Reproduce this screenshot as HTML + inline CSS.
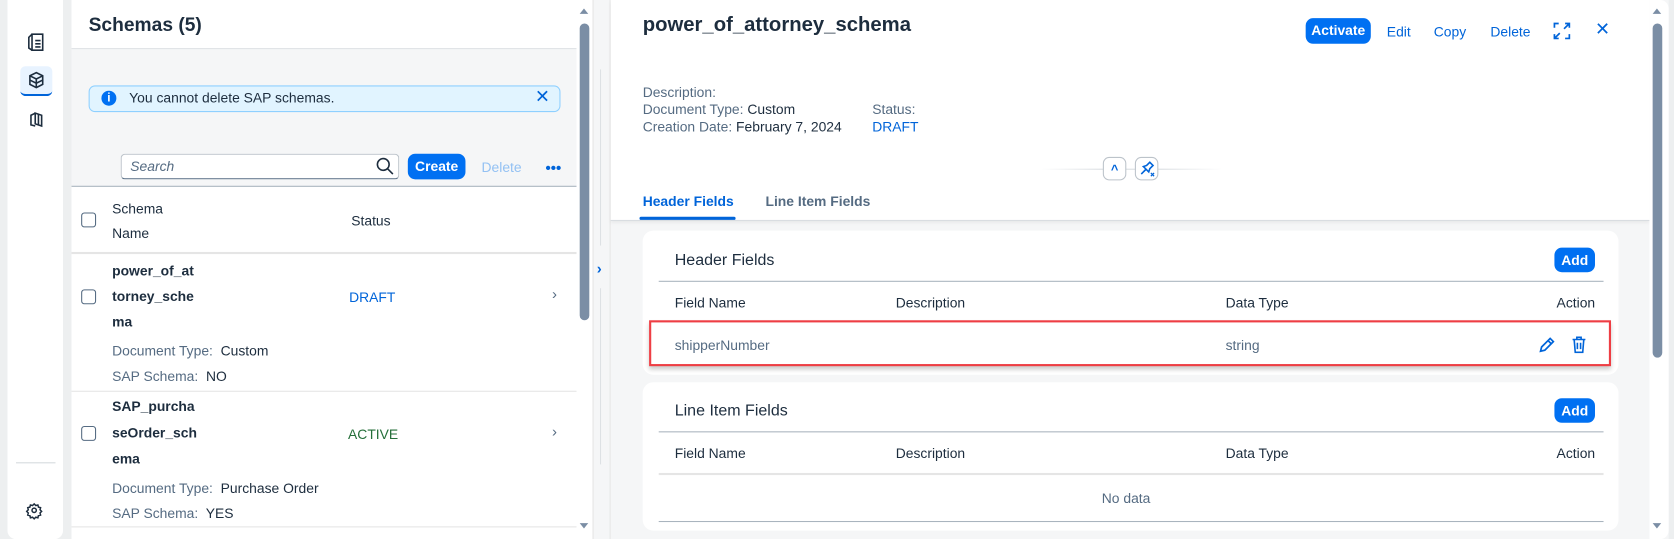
<!DOCTYPE html>
<html><head><meta charset="utf-8"><style>
*{box-sizing:border-box;margin:0;padding:0}
html,body{width:1674px;height:539px;overflow:hidden;background:#edeff0}
#w{position:absolute;left:0;top:0;width:1568px;height:505px;transform:scale(1.0676);transform-origin:0 0;font-family:"Liberation Sans",Arial,sans-serif;color:#1d2d3e;font-size:13px}
.a{position:absolute}
.btn{position:absolute;background:#0070f2;color:#fff;font-weight:bold;border-radius:7px;font-size:13px;text-align:center}
.lnk{position:absolute;color:#0064d9;font-size:13px}
.g{color:#556b82}
.chk{position:absolute;width:14px;height:14px;border:1px solid #556b82;border-radius:3px;background:#fff}
</style></head><body><div id="w">
<div class="a" style="left:7px;top:0;width:52px;height:505px;background:#fff;border-radius:0 0 8px 8px"></div>
<svg class="a" style="left:24px;top:29px" width="20" height="20" viewBox="0 0 20 20" fill="none" stroke="#1d2d3e" stroke-width="1.5"><path d="M6 3h10v15H6z"/><path d="M6 3L3 6v10l3 2"/><path d="M9 9h5M9 12h5M9 15h5"/></svg>
<div class="a" style="left:19px;top:62px;width:30px;height:28px;background:#e8f3ff;border-radius:5px;border-bottom:2px solid #0064d9"></div>
<svg class="a" style="left:25px;top:66px" width="18" height="18" viewBox="0 0 18 18" fill="none" stroke="#1d2d3e" stroke-width="1.5"><path d="M9 2l6 3v8l-6 3-6-3V5z"/><path d="M3 5l6 3 6-3M9 8v8M3 9l6 3 6-3"/></svg>
<svg class="a" style="left:25px;top:103px" width="18" height="18" viewBox="0 0 18 18" fill="none" stroke="#1d2d3e" stroke-width="1.5"><path d="M8 3l6 2v10l-6-2z"/><path d="M8 3L4 5v9l4 1M11 4v10"/></svg>
<div class="a" style="left:15px;top:433px;width:37px;height:1px;background:#d5dadd"></div>
<svg class="a" style="left:24px;top:470px" width="18" height="18" viewBox="0 0 18 18" fill="none" stroke="#1d2d3e" stroke-width="1.4"><circle cx="8" cy="8" r="2"/><path d="M8 2l1.5 1.5 2-.5.5 2 2 .5-.5 2L15 9l-1.5 1.5.5 2-2 .5-.5 2-2-.5L8 16l-1.5-1.5-2 .5-.5-2-2-.5.5-2L1 9l1.5-1.5-.5-2 2-.5.5-2 2 .5z"/></svg>

<div class="a" style="left:67px;top:0;width:473px;height:505px;background:#fff"></div>
<div class="a" style="left:83px;top:13px;font-size:18px;font-weight:bold">Schemas (5)</div>
<div class="a" style="left:67px;top:45px;width:473px;height:130px;background:#f5f6f7;border-top:1px solid #e0e3e6;border-bottom:1px solid #a9b4be"></div>
<div class="a" style="left:83px;top:80px;width:442px;height:25px;background:#e1f4ff;border:1px solid #8fd0ff;border-radius:6px"></div>
<div class="a" style="left:95px;top:85px;width:14px;height:14px;border-radius:50%;background:#0070f2;color:#fff;font-size:11px;font-weight:bold;text-align:center;line-height:14px">i</div>
<div class="a" style="left:121px;top:84px;font-size:13px">You cannot delete SAP schemas.</div>
<div class="a" style="left:501px;top:81px;color:#0064d9;font-size:17px">✕</div>
<div class="a" style="left:113px;top:144px;width:261px;height:24px;background:#fff;border:1px solid #bcc3ca;border-bottom-color:#556b82;border-radius:4px"></div>
<div class="a" style="left:122px;top:148px;font-style:italic;color:#556b82;font-size:13px">Search</div>
<svg class="a" style="left:352px;top:147px" width="17" height="17" viewBox="0 0 17 17" fill="none" stroke="#1d2d3e" stroke-width="1.5"><circle cx="7" cy="7" r="5.5"/><path d="M11 11l5 5"/></svg>
<div class="btn" style="left:382px;top:144px;width:54px;height:24px;line-height:24px">Create</div>
<div class="a" style="left:451px;top:149px;color:#93c1f3;font-size:13px">Delete</div>
<div class="a" style="left:511px;top:149px;color:#0064d9;font-size:14px;font-weight:bold;letter-spacing:0px">•••</div>
<div class="chk" style="left:76px;top:199px"></div>
<div class="a" style="left:105px;top:184px;font-size:13px;line-height:23px">Schema<br>Name</div>
<div class="a" style="left:329px;top:199px">Status</div>
<div class="a" style="left:67px;top:236px;width:473px;height:2px;background:#e5e5e5"></div>
<div class="chk" style="left:76px;top:271px"></div>
<div class="a" style="left:105px;top:242px;font-weight:bold;line-height:24px">power_of_at<br>torney_sche<br>ma</div>
<div class="a" style="left:327px;top:271px;color:#0064d9">DRAFT</div>
<div class="a" style="left:517px;top:267px;color:#556b82;font-size:14px">›</div>
<div class="a g" style="left:105px;top:317px;line-height:24px">Document Type:&nbsp; <span style="color:#1d2d3e">Custom</span><br>SAP Schema:&nbsp; <span style="color:#1d2d3e">NO</span></div>
<div class="a" style="left:67px;top:366px;width:473px;height:1px;background:#e5e5e5"></div>
<div class="chk" style="left:76px;top:399px"></div>
<div class="a" style="left:105px;top:369px;font-weight:bold;line-height:24.5px">SAP_purcha<br>seOrder_sch<br>ema</div>
<div class="a" style="left:326px;top:399px;color:#256f3a">ACTIVE</div>
<div class="a" style="left:517px;top:396px;color:#556b82;font-size:14px">›</div>
<div class="a g" style="left:105px;top:446px;line-height:23px">Document Type:&nbsp; <span style="color:#1d2d3e">Purchase Order</span><br>SAP Schema:&nbsp; <span style="color:#1d2d3e">YES</span></div>
<div class="a" style="left:67px;top:493px;width:473px;height:1px;background:#e5e5e5"></div>
<div class="a" style="left:540px;top:0;width:15px;height:505px;background:#fff"></div>
<div class="a" style="left:543px;top:22px;width:9px;height:278px;background:#7b8ea5;border-radius:5px"></div>
<div class="a" style="left:543px;top:8px;border:4px solid transparent;border-bottom:5px solid #7b8ea5;border-top:0"></div>
<div class="a" style="left:543px;top:490px;border:4px solid transparent;border-top:5px solid #7b8ea5;border-bottom:0"></div>
<div class="a" style="left:555px;top:0;width:17px;height:505px;background:#f5f6f7;border-left:1px solid #e5e5e5;border-right:1px solid #e5e5e5"></div>
<div class="a" style="left:562px;top:65px;width:1px;height:165px;background:#dde1e4"></div>
<div class="a" style="left:562px;top:270px;width:1px;height:165px;background:#dde1e4"></div>
<div class="a" style="left:559px;top:243px;color:#0064d9;font-weight:bold;font-size:14px">›</div>

<div class="a" style="left:572px;top:0;width:991px;height:505px;background:#f5f6f7"></div>
<div class="a" style="left:572px;top:0;width:973px;height:207px;background:#fff;border-bottom:1px solid #d9dde1;box-shadow:0 2px 3px rgba(0,0,0,.05)"></div>
<div class="a" style="left:602px;top:13px;font-size:19px;font-weight:bold">power_of_attorney_schema</div>
<div class="btn" style="left:1223px;top:17px;width:61px;height:24px;line-height:24px">Activate</div>
<div class="lnk" style="left:1299px;top:22px">Edit</div>
<div class="lnk" style="left:1343px;top:22px">Copy</div>
<div class="lnk" style="left:1396px;top:22px">Delete</div>
<svg class="a" style="left:1455px;top:21px" width="16" height="16" viewBox="0 0 16 16" fill="none" stroke="#0064d9" stroke-width="1.6"><path d="M1 5V1h4M11 1h4v4M15 11v4h-4M5 15H1v-4M10 6l5-5M6 10l-5 5"/></svg>
<div class="a" style="left:1494px;top:18px;color:#0064d9;font-size:17px">✕</div>
<div class="a g" style="left:602px;top:79px;line-height:16px">Description:<br>Document Type: <span style="color:#1d2d3e">Custom</span><br>Creation Date: <span style="color:#1d2d3e">February 7, 2024</span></div>
<div class="a g" style="left:817px;top:95px;line-height:16px">Status:<br><span style="color:#0064d9">DRAFT</span></div>
<div class="a" style="left:975px;top:158px;width:170px;height:1px;background:linear-gradient(90deg,transparent,#d9dde1,#d9dde1,transparent)"></div>
<div class="a" style="left:1033px;top:147px;width:22px;height:22px;background:#fff;border:1px solid #bcc3ca;border-radius:6px;color:#0064d9;text-align:center;font-size:12px;line-height:22px;font-weight:bold">^</div>
<div class="a" style="left:1063px;top:147px;width:22px;height:22px;background:#fff;border:1px solid #bcc3ca;border-radius:6px"></div>
<svg class="a" style="left:1066px;top:150px" width="17" height="17" viewBox="0 0 17 17" fill="none" stroke="#0064d9" stroke-width="1.5"><path d="M3 13l4-4M5 6l5 5 1-3 3-3-3-3-3 3z"/><path d="M12 12l3 3M15 12l-3 3" stroke-width="1.2"/></svg>
<div class="a" style="left:602px;top:181px;color:#0064d9;font-weight:bold">Header Fields</div>
<div class="a" style="left:599px;top:203px;width:90px;height:3px;background:#0064d9;border-radius:2px"></div>
<div class="a g" style="left:717px;top:181px;font-weight:bold">Line Item Fields</div>

<div class="a" style="left:602px;top:216px;width:914px;height:135px;background:#fff;border-radius:10px"></div>
<div class="a" style="left:632px;top:235px;font-size:15px">Header Fields</div>
<div class="btn" style="left:1456px;top:232px;width:38px;height:23px;line-height:23px">Add</div>
<div class="a" style="left:617px;top:263px;width:885px;height:1px;background:#a9b4be"></div>
<div class="a" style="left:632px;top:276px">Field Name</div>
<div class="a" style="left:839px;top:276px">Description</div>
<div class="a" style="left:1148px;top:276px">Data Type</div>
<div class="a" style="left:1458px;top:276px">Action</div>
<div class="a" style="left:608px;top:300px;width:901px;height:43px;border:2px solid #ee3e44;box-shadow:0 3px 4px rgba(0,0,0,.2)"></div>
<div class="a g" style="left:632px;top:316px">shipperNumber</div>
<div class="a" style="left:1148px;top:316px;color:#556b82">string</div>
<svg class="a" style="left:1441px;top:315px" width="16" height="16" viewBox="0 0 16 16" fill="none" stroke="#0064d9" stroke-width="1.6"><path d="M2 14l1-4 8-8 3 3-8 8z"/><path d="M9 4l3 3"/></svg>
<svg class="a" style="left:1472px;top:315px" width="14" height="16" viewBox="0 0 14 16" fill="none" stroke="#0064d9" stroke-width="1.5"><path d="M1 3h12M5 3V1h4v2M2.5 3l1 12h7l1-12M5.5 6v6M8.5 6v6"/></svg>

<div class="a" style="left:602px;top:358px;width:914px;height:139px;background:#fff;border-radius:10px"></div>
<div class="a" style="left:632px;top:376px;font-size:15px">Line Item Fields</div>
<div class="btn" style="left:1456px;top:373px;width:38px;height:23px;line-height:23px">Add</div>
<div class="a" style="left:617px;top:404px;width:885px;height:1px;background:#a9b4be"></div>
<div class="a" style="left:632px;top:417px">Field Name</div>
<div class="a" style="left:839px;top:417px">Description</div>
<div class="a" style="left:1148px;top:417px">Data Type</div>
<div class="a" style="left:1458px;top:417px">Action</div>
<div class="a" style="left:617px;top:443px;width:885px;height:2px;background:#e5e5e5"></div>
<div class="a g" style="left:1032px;top:459px">No data</div>
<div class="a" style="left:617px;top:488px;width:885px;height:1px;background:#a9b4be"></div>

<div class="a" style="left:1545px;top:0;width:18px;height:505px;background:#fff;border-radius:0 8px 8px 0"></div>
<div class="a" style="left:1548px;top:22px;width:9px;height:313px;background:#7b8ea5;border-radius:5px"></div>
<div class="a" style="left:1548px;top:8px;border:4px solid transparent;border-bottom:5px solid #7b8ea5;border-top:0"></div>
<div class="a" style="left:1548px;top:490px;border:4px solid transparent;border-top:5px solid #7b8ea5;border-bottom:0"></div>
</div></body></html>
